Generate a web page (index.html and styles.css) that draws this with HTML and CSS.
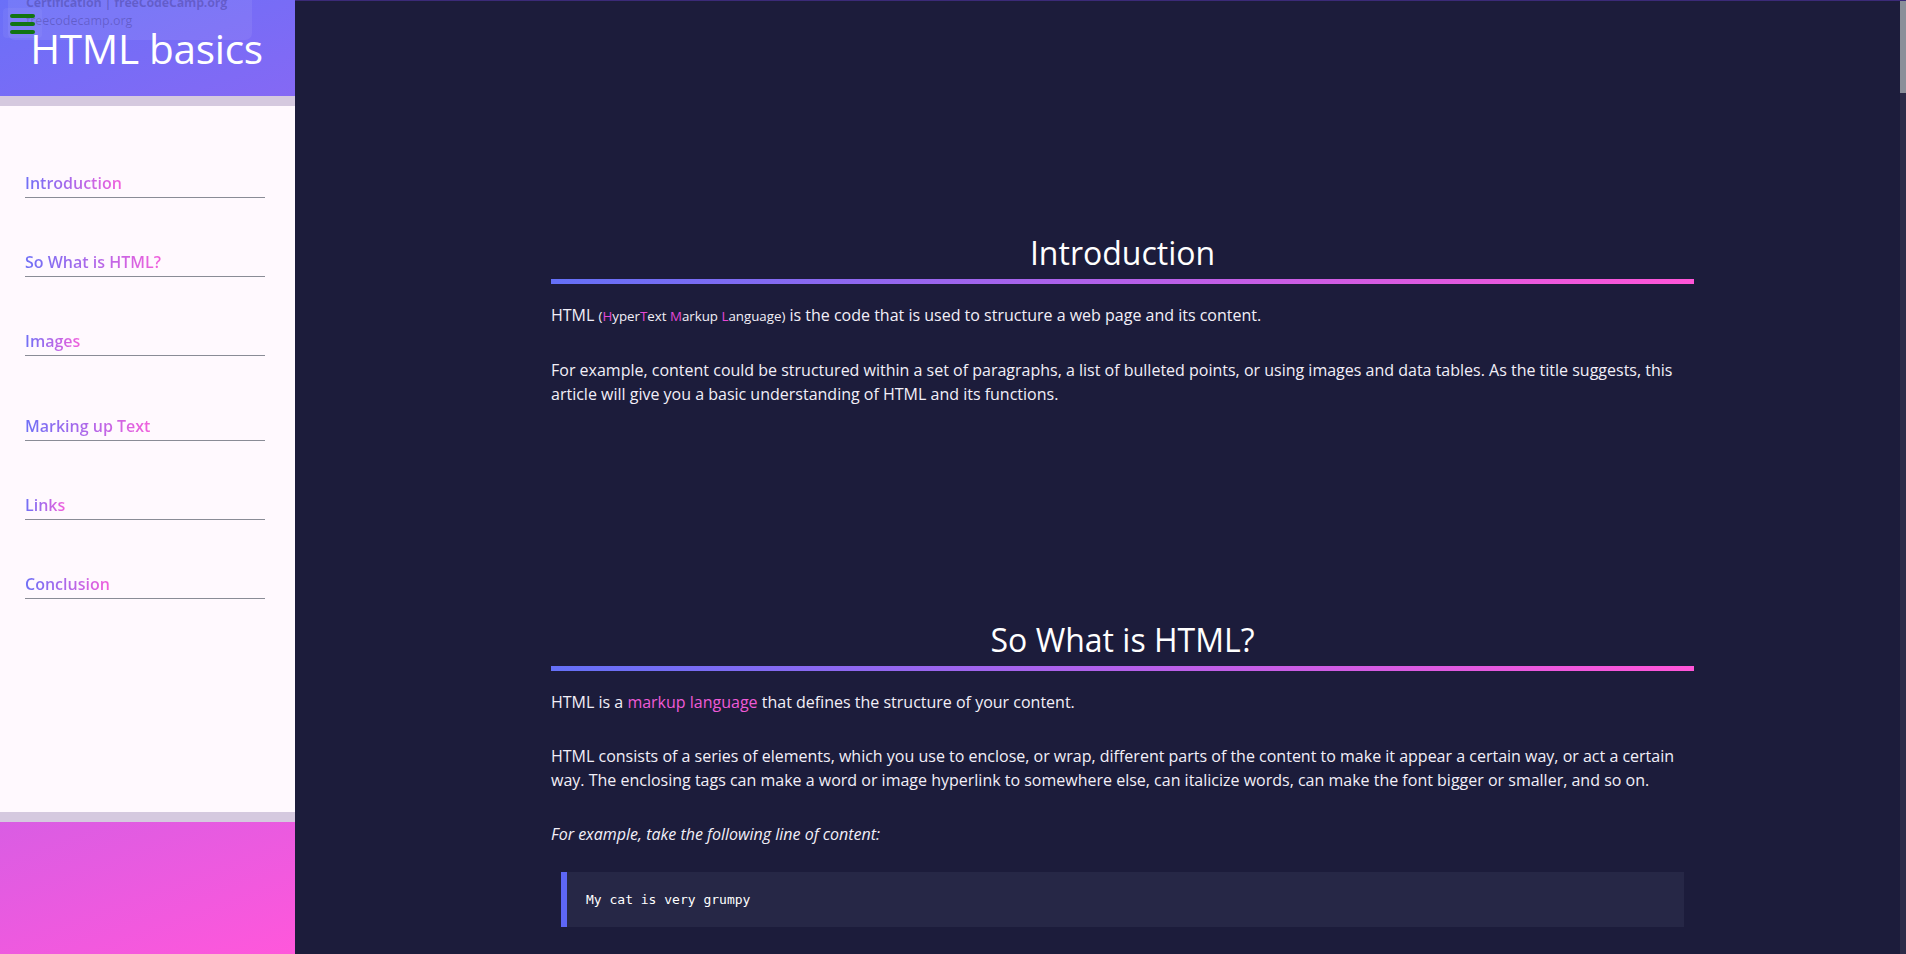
FILE: index.html
```html
<!DOCTYPE html>
<html lang="en">
<head>
<meta charset="utf-8">
<title>HTML basics</title>
<link rel="stylesheet" href="styles.css">
</head>
<body>
<div class="page">
  <aside class="sidebar">
    <header class="side-head">
      <h1 class="title">HTML basics</h1>
    </header>
    <div class="band"></div>
    <nav class="nav">
      <a class="nav-link" href="#introduction"><span class="grad">Introduction</span></a>
      <a class="nav-link" href="#what"><span class="grad">So What is HTML?</span></a>
      <a class="nav-link" href="#images"><span class="grad">Images</span></a>
      <a class="nav-link nav-link-tall" href="#marking"><span class="grad">Marking up Text</span></a>
      <a class="nav-link" href="#links"><span class="grad">Links</span></a>
      <a class="nav-link" href="#conclusion"><span class="grad">Conclusion</span></a>
    </nav>
    <div class="band"></div>
    <footer class="side-foot"></footer>
  </aside>

  <div class="main-wrap">
    <main class="main">
      <article class="article">
        <section class="section" id="introduction">
          <h2 class="sec-title">Introduction</h2>
          <p class="text">HTML <span class="abbr">(<b class="hl">H</b>yper<b class="hl">T</b>ext <b class="hl">M</b>arkup <b class="hl">L</b>anguage)</span> is the code that is used to structure a web page and its content.</p>
          <p class="text">For example, content could be structured within a set of paragraphs, a list of bulleted points, or using images and data tables. As the title suggests, this article will give you a basic understanding of HTML and its functions.</p>
        </section>

        <section class="section" id="what">
          <h2 class="sec-title">So What is HTML?</h2>
          <p class="text">HTML is a <a class="pink" href="#what">markup language</a> that defines the structure of your content.</p>
          <p class="text">HTML consists of a series of elements, which you use to enclose, or wrap, different parts of the content to make it appear a certain way, or act a certain way. The enclosing tags can make a word or image hyperlink to somewhere else, can italicize words, can make the font bigger or smaller, and so on.</p>
          <p class="text text-em"><em>For example, take the following line of content:</em></p>
          <pre class="code">My cat is very grumpy</pre>
          <p class="text">If we wanted the line to stand by itself, we could specify that it is a paragraph by enclosing it in paragraph tags:</p>
          <pre class="code">&lt;p&gt;My cat is very grumpy&lt;/p&gt;</pre>
          <p class="text">The main parts of our element are the opening tag, the closing tag, the content and the element itself.</p>
        </section>

        <section class="section" id="images">
          <h2 class="sec-title">Images</h2>
          <p class="text">Let's turn our attention to the &lt;img&gt; element again:</p>
          <pre class="code">&lt;img src="images/firefox-icon.png" alt="My test image"&gt;</pre>
          <p class="text">This embeds an image into our page in the position it appears. It does this via the src (source) attribute, which contains the path to our image file.</p>
          <p class="text">We have also included an alt (alternative) attribute. In this attribute, you specify descriptive text for users who cannot see the image.</p>
        </section>

        <section class="section" id="marking">
          <h2 class="sec-title">Marking up Text</h2>
          <p class="text">This section will cover some of the essential HTML elements you'll use for marking up the text.</p>
          <p class="text">Heading elements allow you to specify that certain parts of your content are headings — or subheadings.</p>
          <pre class="code">&lt;h1&gt;My main title&lt;/h1&gt;
&lt;h2&gt;My top level heading&lt;/h2&gt;
&lt;h3&gt;My subheading&lt;/h3&gt;
&lt;h4&gt;My sub-subheading&lt;/h4&gt;</pre>
          <p class="text">As explained above, &lt;p&gt; elements are for containing paragraphs of text; you'll use these frequently when marking up regular text content.</p>
          <p class="text">A lot of the web's content is lists and HTML has special elements for these. Marking up lists always consists of at least 2 elements.</p>
        </section>

        <section class="section" id="links">
          <h2 class="sec-title">Links</h2>
          <p class="text">Links are very important — they are what makes the web a web! To add a link, we need to use a simple element — &lt;a&gt; — "a" being the short form for "anchor".</p>
          <pre class="code">&lt;a href="https://www.mozilla.org/en-US/about/manifesto/"&gt;Mozilla Manifesto&lt;/a&gt;</pre>
          <p class="text">You might get unexpected results if you omit the https:// or http:// part, called the protocol, at the beginning of the web address.</p>
        </section>

        <section class="section" id="conclusion">
          <h2 class="sec-title">Conclusion</h2>
          <p class="text">If you have followed all the instructions in this article, you should end up with a page that looks like a real web page.</p>
          <p class="text">If you get stuck, you can always compare your work with a finished example on GitHub.</p>
        </section>
      </article>
    </main>
    <div class="scrollbar"><div class="thumb"></div></div>
  </div>

  <div class="tooltip">
    <div class="tip-title">Certification | freeCodeCamp.org</div>
    <div class="tip-url">freecodecamp.org</div>
  </div>
  <button class="menu-btn" type="button" aria-label="menu">
    <span class="bar"></span><span class="bar"></span><span class="bar"></span>
  </button>
</div>
</body>
</html>
```

FILE: styles.css
```css
* { box-sizing: border-box; }

html, body {
  margin: 0;
  padding: 0;
  height: 100%;
  overflow: hidden;
}

body {
  font-family: "Open Sans", "Noto Sans", sans-serif;
  background: #1c1c3b;
}

.page {
  display: flex;
  height: 954px;
  position: relative;
}

/* ---------- sidebar ---------- */
.sidebar {
  width: 295px;
  flex: 0 0 295px;
  display: flex;
  flex-direction: column;
  background: linear-gradient(160deg, #6a70f8 0%, #8d66f3 25%, #c460e8 65%, #ff57db 100%);
}

.side-head {
  height: 96px;
  display: flex;
  align-items: center;
  justify-content: center;
}

.title {
  margin: 0 2px 0 0;
  color: #ffffff;
  font-weight: 400;
  font-size: 40.5px;
  letter-spacing: -0.3px;
}

.band {
  height: 10px;
  background: #d5c9df;
}

.nav {
  flex: 1;
  background: #fff9fe;
  display: flex;
  flex-direction: column;
  gap: 52px;
  padding: 65px 30px 0 25px;
}

.nav-link {
  display: block;
  text-decoration: none;
  font-size: 16px;
  font-weight: 600;
  line-height: 24px;
  padding-bottom: 2px;
  border-bottom: 1px solid #8a8c96;
}

.nav-link-tall { margin-top: 6px; }

.grad {
  background: linear-gradient(90deg, #6f70f6, #f160dc);
  -webkit-background-clip: text;
  background-clip: text;
  color: transparent;
}

.side-foot {
  height: 132px;
}

/* ---------- main ---------- */
.main-wrap {
  flex: 1;
  display: flex;
  border-top: 1px solid #3b2a78;
  min-width: 0;
}

.main {
  flex: 1;
  overflow: hidden;
  background: #1c1c3b;
}

.scrollbar {
  width: 6px;
  flex: 0 0 6px;
  background: #2c2b48;
}

.thumb {
  height: 92px;
  background: #8a8f99;
}

.article {
  width: 1143px;
  margin-left: 256px;
  padding-top: 48px;
  color: #f2eff8;
}

.section {
  display: flow-root;
  padding-top: 182px;
}

.sec-title {
  margin: 0 0 19px;
  text-align: center;
  font-weight: 400;
  font-size: 32px;
  line-height: 44px;
  color: #ffffff;
  padding-bottom: 4px;
  border-bottom: 5px solid #6a70f8;
  border-image: linear-gradient(90deg, #6470f7, #b460ea 50%, #ff55d8) 1;
}

.text {
  margin: 0 0 30px;
  font-size: 16px;
  line-height: 24px;
}

.text-em { margin-bottom: 26px; }

.abbr {
  font-size: 13.3px;
}

.hl {
  font-weight: 400;
  color: #e548d6;
}

.pink {
  color: #ee5ad6;
  text-decoration: none;
}

.code {
  margin: 0 10px 30px;
  padding: 20px 19px;
  background: #262746;
  border-left: 6px solid #5d66f6;
  font-family: "DejaVu Sans Mono", monospace;
  font-size: 13px;
  line-height: 15px;
  color: #ffffff;
  white-space: pre-wrap;
}

/* ---------- overlays ---------- */
.tooltip {
  position: absolute;
  left: 8px;
  top: -6px;
  width: 244px;
  height: 46px;
  border-radius: 7px;
  background: rgba(255, 255, 255, 0.07);
  padding: 0 0 0 18px;
  font-family: "Open Sans", sans-serif;
  font-size: 12.5px;
  line-height: 18px;
  color: rgba(40, 25, 90, 0.28);
}

.tip-title {
  font-weight: 700;
  letter-spacing: -0.2px;
}

.menu-btn {
  position: absolute;
  left: 3px;
  top: 8px;
  width: 39px;
  height: 30px;
  border: 0;
  border-radius: 4px;
  background: rgba(255, 255, 255, 0.05);
  padding: 6px 0 0 7px;
  display: flex;
  flex-direction: column;
  gap: 4px;
}

.bar {
  display: block;
  width: 25px;
  height: 4px;
  border-radius: 2px;
  background: #127412;
}
```
